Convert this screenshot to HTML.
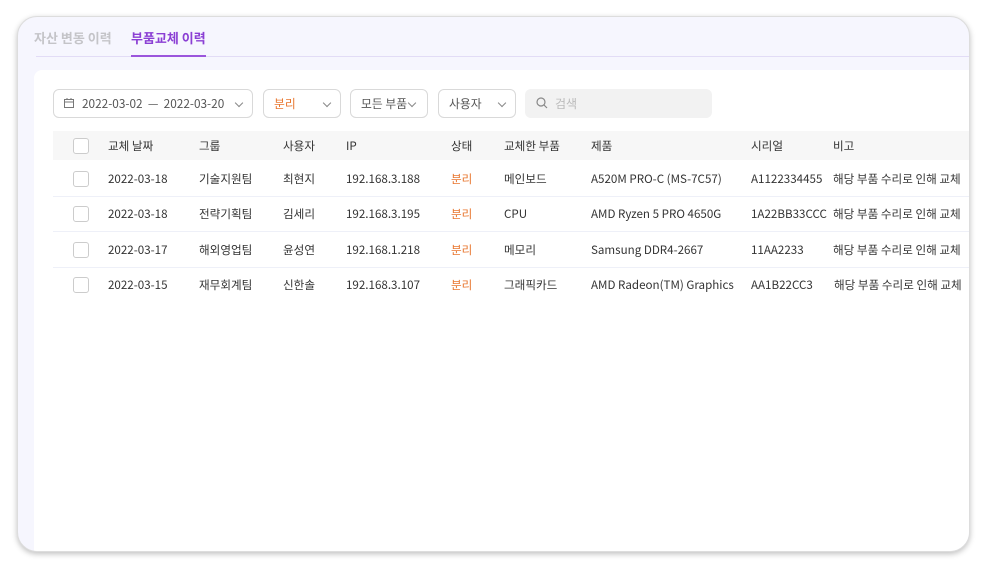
<!DOCTYPE html>
<html><head><meta charset="utf-8"><style>
*{box-sizing:border-box;margin:0;padding:0}
body{width:986px;height:568px;background:#fff;font-family:"Noto Sans CJK KR","Liberation Sans",sans-serif;position:relative;overflow:hidden;color:#333}
.frame{position:absolute;left:17px;top:16px;width:953px;height:536px;border-radius:20px;background:#f6f6fe;box-shadow:0 2px 6px rgba(0,0,0,.25);overflow:hidden;border:1px solid #ddd}
.a{position:absolute;white-space:nowrap}
.panel{position:absolute;left:16px;top:53px;width:940px;height:490px;background:#fff;border-top-left-radius:8px}
.box{position:absolute;top:72px;height:29px;border:1px solid #d9d9d9;border-radius:6px;font-size:11.8px;line-height:27px;padding-left:10px;color:#555;background:#fff}
.chev{position:absolute;right:10px;top:10px;width:6px;height:6px;border-right:1px solid #888;border-bottom:1px solid #888;transform:rotate(45deg)}
.t{font-size:11.6px;color:#333;line-height:16px}
.cb{position:absolute;width:16px;height:16px;border:1px solid #ccc;border-radius:3px;background:#fff}
.line{position:absolute;left:35px;width:920px;height:1px;background:#eef0f8}
</style></head><body>
<div class="frame">
<div class="panel"></div>
<div class="a" style="left:16px;top:11px;font-size:13px;line-height:20px;color:#c4c4c8;font-weight:bold">자산 변동 이력</div>
<div class="a" style="left:113px;top:11px;font-size:13px;line-height:20px;color:#8b3fd4;font-weight:bold">부품교체 이력</div>
<div class="a" style="left:18px;top:39px;width:940px;height:1px;background:#e2dcf6"></div>
<div class="a" style="left:113px;top:38px;width:75px;height:2px;background:#9b55dc"></div>

<div class="box" style="left:35px;width:200px;padding-left:28px">2022-03-02 &nbsp;— &nbsp;2022-03-20
<svg style="position:absolute;left:10px;top:8px" width="10" height="10" viewBox="0 0 10 10" fill="none" stroke="#777" stroke-width="1"><rect x="0.5" y="1.5" width="9" height="8"/><line x1="0.5" y1="4" x2="9.5" y2="4"/><line x1="3" y1="0" x2="3" y2="2"/><line x1="7" y1="0" x2="7" y2="2"/></svg><div class="chev"></div></div>
<div class="box" style="left:245px;width:78px;color:#e8762e">분리<div class="chev"></div></div>
<div class="box" style="left:332px;width:78px">모든 부품<div class="chev" style="right:12px"></div></div>
<div class="box" style="left:420px;width:78px">사용자<div class="chev"></div></div>
<div class="a" style="left:507px;top:72px;width:187px;height:29px;background:#f2f2f2;border-radius:6px;font-size:12px;line-height:29px;padding-left:30px;color:#bbb">검색
<svg style="position:absolute;left:11px;top:8px" width="12" height="12" viewBox="0 0 12 12" fill="none" stroke="#888" stroke-width="1.2"><circle cx="5" cy="5" r="4"/><line x1="8" y1="8" x2="11" y2="11"/></svg></div>
<div class="a" style="left:35px;top:114px;width:920px;height:29px;background:#f7f7f7"></div>

<div class="cb" style="left:55px;top:121px"></div>
<div class="a t" style="left:90px;top:121px">교체 날짜</div>
<div class="a t" style="left:181px;top:121px">그룹</div>
<div class="a t" style="left:265px;top:121px">사용자</div>
<div class="a t" style="left:328px;top:121px">IP</div>
<div class="a t" style="left:433px;top:121px">상태</div>
<div class="a t" style="left:486px;top:121px">교체한 부품</div>
<div class="a t" style="left:573px;top:121px">제품</div>
<div class="a t" style="left:733px;top:121px">시리얼</div>
<div class="a t" style="left:815px;top:121px">비고</div>

<div class="cb" style="left:55px;top:154px"></div>
<div class="a t" style="left:90px;top:154px">2022-03-18</div><div class="a t" style="left:181px;top:154px">기술지원팀</div><div class="a t" style="left:265px;top:154px">최현지</div><div class="a t" style="left:328px;top:154px">192.168.3.188</div><div class="a t" style="left:433px;top:154px;color:#e8762e">분리</div><div class="a t" style="left:486px;top:154px">메인보드</div><div class="a t" style="left:573px;top:154px">A520M PRO-C (MS-7C57)</div><div class="a t" style="left:733px;top:154px">A1122334455</div><div class="a t" style="left:815px;top:154px">해당 부품 수리로 인해 교체</div>
<div class="line" style="top:179px"></div>

<div class="cb" style="left:55px;top:189px"></div>
<div class="a t" style="left:90px;top:189px">2022-03-18</div><div class="a t" style="left:181px;top:189px">전략기획팀</div><div class="a t" style="left:265px;top:189px">김세리</div><div class="a t" style="left:328px;top:189px">192.168.3.195</div><div class="a t" style="left:433px;top:189px;color:#e8762e">분리</div><div class="a t" style="left:486px;top:189px">CPU</div><div class="a t" style="left:573px;top:189px">AMD Ryzen 5 PRO 4650G</div><div class="a t" style="left:733px;top:189px">1A22BB33CCC</div><div class="a t" style="left:815px;top:189px">해당 부품 수리로 인해 교체</div>
<div class="line" style="top:214px"></div>

<div class="cb" style="left:55px;top:225px"></div>
<div class="a t" style="left:90px;top:225px">2022-03-17</div><div class="a t" style="left:181px;top:225px">해외영업팀</div><div class="a t" style="left:265px;top:225px">윤성연</div><div class="a t" style="left:328px;top:225px">192.168.1.218</div><div class="a t" style="left:433px;top:225px;color:#e8762e">분리</div><div class="a t" style="left:486px;top:225px">메모리</div><div class="a t" style="left:573px;top:225px">Samsung DDR4-2667</div><div class="a t" style="left:733px;top:225px">11AA2233</div><div class="a t" style="left:815px;top:225px">해당 부품 수리로 인해 교체</div>
<div class="line" style="top:250px"></div>

<div class="cb" style="left:55px;top:260px"></div>
<div class="a t" style="left:90px;top:260px">2022-03-15</div><div class="a t" style="left:181px;top:260px">재무회계팀</div><div class="a t" style="left:265px;top:260px">신한솔</div><div class="a t" style="left:328px;top:260px">192.168.3.107</div><div class="a t" style="left:433px;top:260px;color:#e8762e">분리</div><div class="a t" style="left:486px;top:260px">그래픽카드</div><div class="a t" style="left:573px;top:260px">AMD Radeon(TM) Graphics</div><div class="a t" style="left:733px;top:260px">AA1B22CC3</div><div class="a t" style="left:816px;top:260px">해당 부품 수리로 인해 교체</div>
</div>
</body></html>
